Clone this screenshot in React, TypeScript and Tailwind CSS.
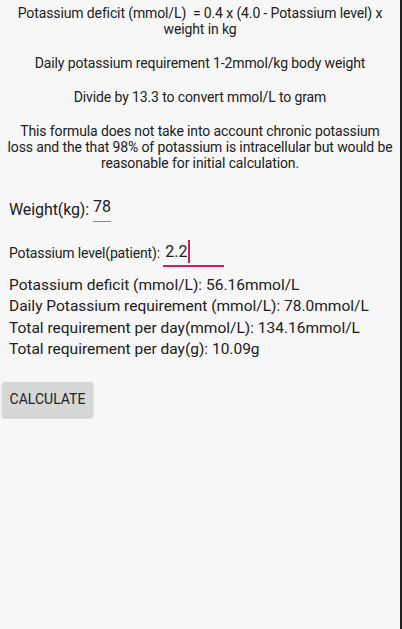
import React from "react";

export default function App() {
  return (
    <div
      className="w-[402px] h-[629px] bg-[#f7f7f7] border-r-2 border-[#202020] text-[#202020] overflow-hidden"
      style={{ fontFamily: "Roboto, 'Noto Sans', sans-serif" }}
    >
      <div className="pt-[5px] text-center text-[14px] leading-[16px] tracking-[-0.12px] whitespace-nowrap flex flex-col gap-[18px]">
        <p>
          Potassium deficit (mmol/L)&nbsp; = 0.4 x (4.0 - Potassium level) x
          <br />
          weight in kg
        </p>
        <p>Daily potassium requirement 1-2mmol/kg body weight</p>
        <p>Divide by 13.3 to convert mmol/L to gram</p>
        <p>
          This formula does not take into account chronic potassium
          <br />
          loss and the that 98% of potassium is intracellular but would be
          <br />
          reasonable for initial calculation.
        </p>
      </div>

      <div className="mt-[26px] pl-[9px] flex items-end text-[16px] leading-[20px] tracking-[-0.1px]">
        <span>Weight(kg):&nbsp;</span>
        <span className="relative pb-[3px]">
          <span>78</span>
          <span className="absolute left-[0px] right-[0px] bottom-[-2px] h-[1px] bg-[#8a8a8a]" />
        </span>
      </div>

      <div className="mt-[21px] pl-[9px] flex items-end">
        <span className="text-[14px] leading-[20px] tracking-[-0.15px] pb-[1px]">Potassium level(patient):&nbsp;</span>
        <span className="relative w-[61px] pl-[2px] text-[16px] leading-[22px] pb-[1px]">
          <span>2.2</span>
          <span className="absolute left-[25px] top-[-1px] w-[2px] h-[23px] bg-[#d81b60]" />
          <span className="absolute left-[0px] right-[0px] bottom-[-3px] h-[2px] bg-[#d81b60]" />
        </span>
      </div>

      <div className="mt-[11px] pl-[9px] text-[15.5px] leading-[21.4px] whitespace-nowrap">
        <p>Potassium deficit (mmol/L): 56.16mmol/L</p>
        <p>Daily Potassium requirement (mmol/L): 78.0mmol/L</p>
        <p>Total requirement per day(mmol/L): 134.16mmol/L</p>
        <p>Total requirement per day(g): 10.09g</p>
      </div>

      <div className="mt-[21px] pl-[2px]">
        <button className="w-[91px] h-[35px] bg-[#d6d7d7] rounded-[2px] shadow-[0_1px_2px_rgba(0,0,0,0.25)] text-[14px] font-normal text-[#222]">
          CALCULATE
        </button>
      </div>
    </div>
  );
}
